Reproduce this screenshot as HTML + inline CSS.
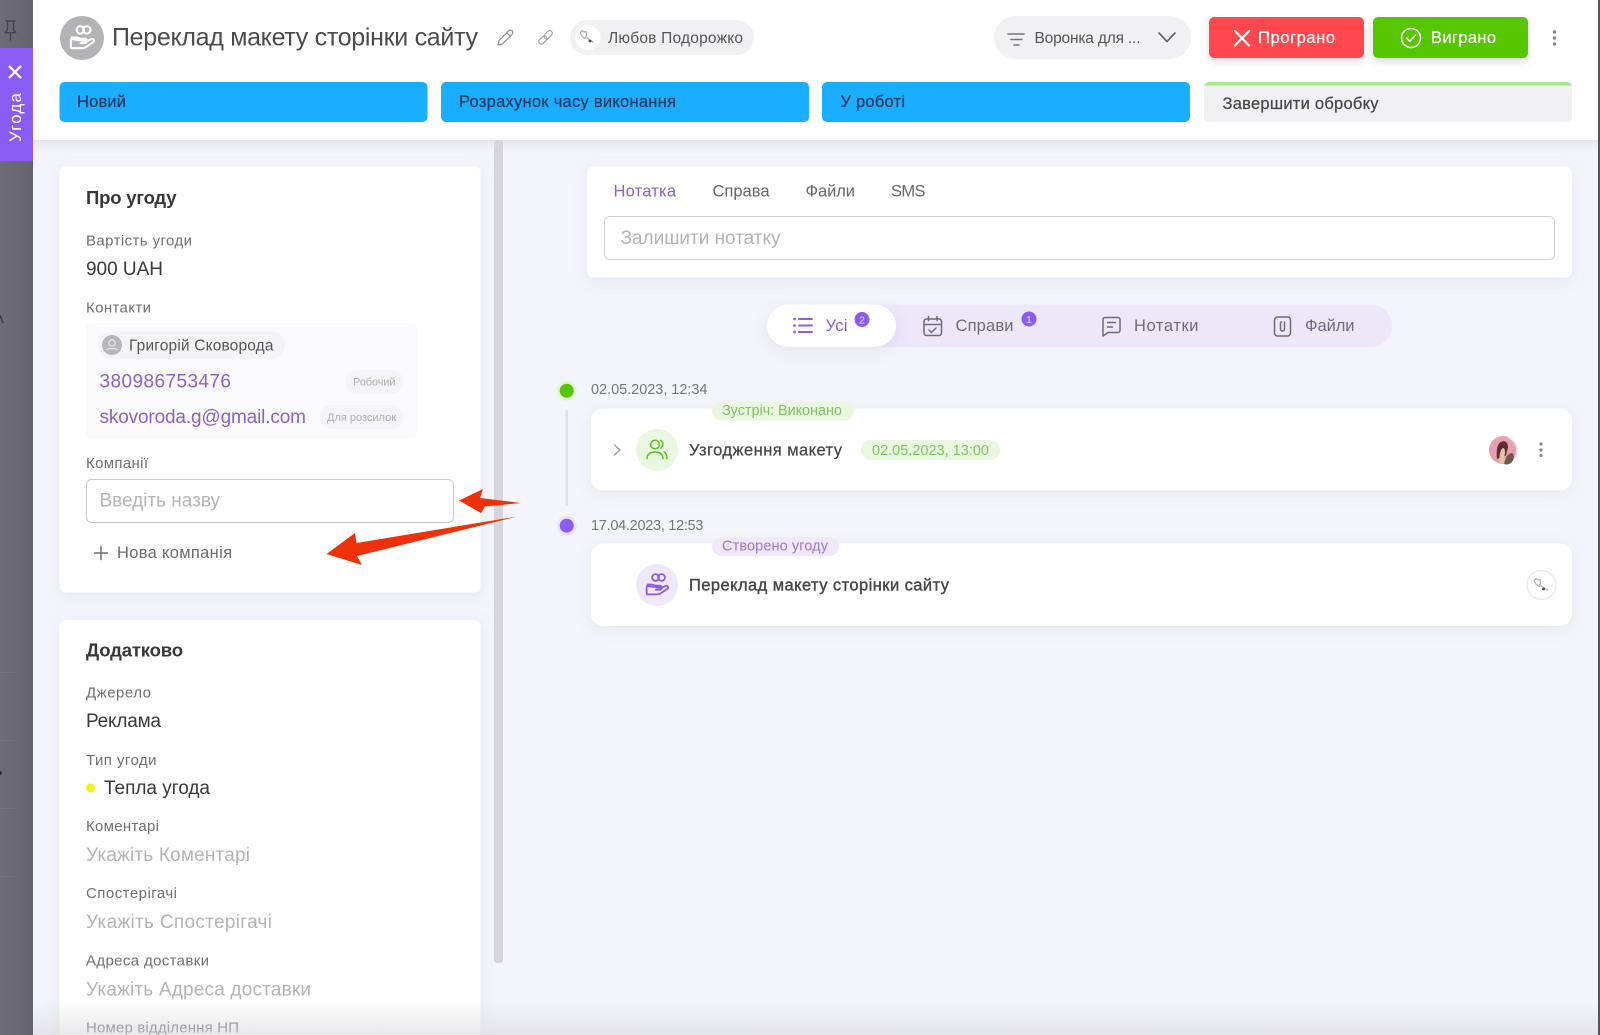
<!DOCTYPE html>
<html lang="uk"><head><meta charset="utf-8"><title>Угода</title>
<style>
html,body{margin:0;padding:0;width:1600px;height:1035px;overflow:hidden;background:#f4f5fb}
svg{display:block;filter:blur(.3px)}
text{font-family:"Liberation Sans",sans-serif;fill:#3e3e44}
.l{font-size:15px;fill:#6f6f75}
.v{font-size:19px;fill:#38383d}
.p{font-size:19px;fill:#b4b4b8}
.h{font-size:18.5px;font-weight:bold;fill:#36363b}
.b{font-size:16.5px;fill:#173a5e;stroke:#173a5e;stroke-width:.25}
.t{fill:#6f6c78}
.d{font-size:14.5px;fill:#77777c}
.g{font-size:14.5px;fill:#7cc75c}
.pu{font-size:14.5px;fill:#9a76d8}
.i{fill:none;stroke-linecap:round;stroke-linejoin:round}
</style></head><body>
<svg width="1600" height="1035" viewBox="0 0 1600 1035" xmlns="http://www.w3.org/2000/svg">
<defs>
<filter id="s" x="-5%" y="-20%" width="110%" height="145%"><feDropShadow dx="0" dy="3" stdDeviation="7" flood-color="#8b8ba8" flood-opacity=".14"/></filter>
<filter id="bs" x="-10%" y="-20%" width="120%" height="170%"><feDropShadow dx="0" dy="4" stdDeviation="4" flood-color="#555" flood-opacity=".2"/></filter>
<filter id="ss" x="-20%" y="-30%" width="140%" height="180%"><feDropShadow dx="0" dy="4" stdDeviation="7" flood-color="#77709a" flood-opacity=".14"/></filter>
<linearGradient id="fade" x1="0" y1="0" x2="0" y2="1"><stop offset="0" stop-color="#d8d8dc" stop-opacity="0"/><stop offset="1" stop-color="#d8d8dc" stop-opacity=".6"/></linearGradient>
<linearGradient id="hs" x1="0" y1="0" x2="0" y2="1"><stop offset="0" stop-color="#d6d6de" stop-opacity=".55"/><stop offset="1" stop-color="#f4f5fb" stop-opacity="0"/></linearGradient>
<linearGradient id="side" x1="0" y1="0" x2="1" y2="0"><stop offset="0" stop-color="#6e6c78"/><stop offset="1" stop-color="#65636e"/></linearGradient>
<symbol id="deal" viewBox="0 0 24 24" overflow="visible">
<circle cx="10.500" cy="4.500" r="3.400"/><circle cx="16.500" cy="4.500" r="3.400"/>
<path d="M2.500 11.500h4c1.500 0 3 1.200 5 1.200h3.300a2 2 0 0 1 0 4h-4M16.500 15l4-2c2.300-1 3.600 1.800 1.600 3l-6.500 4.400c-1 .6-2 1-3.200 1H2.500a.8.8 0 0 1-.8-.8v-6.800a.8.8 0 0 1 .8-.8z"/>
</symbol>
</defs>

<!-- base -->
<rect width="1600" height="1035" fill="#f4f5fb"/>
<rect x="0" y="0" width="33" height="1035" fill="url(#side)"/>
<rect x="1598" y="0" width="2" height="1035" fill="#55535c"/>
<g stroke="#75737e" stroke-width="1"><path d="M0 672.500h16M0 740.500h16M0 808.500h16M0 876.500h16"/></g>
<circle cx="0" cy="773" r="2" fill="#2f2e33"/>
<path d="M0 315l3 8" stroke="#3d3c42" stroke-width="1.500"/>
<path class="i" stroke="#45444b" stroke-width="1.400" d="M6 21h9M7.500 21v8.500l-2.200 3.200h10.400l-2.200-3.200V21M10.500 33v7"/>

<!-- header -->
<rect x="33" y="140" width="1565" height="16" fill="url(#hs)"/>
<rect x="33" y="0" width="1565" height="140" fill="#fff"/>

<rect x="0" y="48" width="33" height="113" fill="#8b5cf3"/>
<path d="M9.500 66.500l11 11M20.500 66.500l-11 11" stroke="#fff" stroke-width="2.200" stroke-linecap="round"/>
<text transform="translate(21 142) rotate(-90)" font-size="17" style="fill:#fff" textLength="49">Угода</text>

<circle cx="82" cy="38" r="22" fill="#b3b3b5"/>
<use href="#deal" x="69" y="25" width="26" height="26" class="i" stroke="#fff" stroke-width="1.900"/>
<text x="112" y="45.500" font-size="25" style="fill:#4a4a50" textLength="366">Переклад макету сторінки сайту</text>
<path class="i" stroke="#8e8e93" stroke-width="1.200" d="M498 45l1-4.500 9.500-9.500c1.200-1.200 2.900-1.200 3.700-.2s.8 2.500-.4 3.700l-9.300 9.500zM507 33l3.500 3.500"/>
<g transform="translate(545.500 37.500) rotate(45)" fill="none" stroke="#a2a2a6" stroke-width="1.200"><rect x="-2.600" y="-8.500" width="5.200" height="9.500" rx="2.600"/><rect x="-2.600" y="-1" width="5.200" height="9.500" rx="2.600"/></g>
<rect x="570" y="20" width="184" height="35" rx="17.500" fill="#f1f1f3"/>
<circle cx="588" cy="37.500" r="12.500" fill="#fff"/>
<path class="i" stroke="#a9a9ae" stroke-width="1.200" d="M580 33l2-2.500 2 1.500 2-.5.500 3-1 4-3-1.500zM587 38l6 4"/>
<circle cx="590" cy="41" r="1.400" fill="#444"/>
<text x="608" y="43" font-size="15.500" style="fill:#55555b" textLength="135">Любов Подорожко</text>

<rect x="994" y="16" width="197" height="43" rx="21.500" fill="#f1f1f3"/>
<path d="M1008 34h16M1011 39.500h11M1014 45h5" stroke="#75757b" stroke-width="1.600" stroke-linecap="round"/>
<text x="1034.500" y="43" font-size="15.500" style="fill:#55555b" textLength="106">Воронка для ...</text>
<path class="i" stroke="#66666c" stroke-width="1.700" d="M1159 33l8 8.500 8-8.500"/>

<rect x="1209" y="17" width="155" height="41" rx="5" fill="#ff4a50" filter="url(#bs)"/>
<path d="M1235 31l14 14.500M1249 31l-14 14.500" stroke="#fff" stroke-width="2.200" stroke-linecap="round"/>
<text x="1258" y="43" font-size="16.500" style="fill:#fff;stroke:#fff;stroke-width:.2" textLength="77">Програно</text>
<rect x="1373" y="17" width="155" height="41" rx="5" fill="#56c600" filter="url(#bs)"/>
<circle cx="1411" cy="38" r="9.500" fill="none" stroke="#fff" stroke-width="1.500"/>
<path class="i" stroke="#fff" stroke-width="1.500" d="M1406.500 38l3.200 3.300 6-6.300"/>
<text x="1431" y="43" font-size="16.500" style="fill:#fff;stroke:#fff;stroke-width:.2" textLength="65">Виграно</text>
<g fill="#85858a"><circle cx="1554.500" cy="32" r="1.700"/><circle cx="1554.500" cy="38" r="1.700"/><circle cx="1554.500" cy="44" r="1.700"/></g>

<rect x="59.500" y="82" width="368" height="40" rx="5" fill="#1badff"/>
<rect x="441" y="82" width="368" height="40" rx="5" fill="#1badff"/>
<rect x="822" y="82" width="368" height="40" rx="5" fill="#1badff"/>
<rect x="1204" y="82" width="368" height="40" rx="5" fill="#a9e88f"/>
<path d="M1204 85.500h368V117a5 5 0 0 1-5 5h-358a5 5 0 0 1-5-5z" fill="#f1f1f3"/>
<text class="b" x="77" y="107" textLength="49">Новий</text>
<text class="b" x="459" y="107" textLength="217">Розрахунок часу виконання</text>
<text class="b" x="840.500" y="107" textLength="64.500">У роботі</text>
<text class="b" x="1222.500" y="109" style="fill:#47474d;stroke:#47474d" textLength="156">Завершити обробку</text>

<!-- scrollbar -->
<rect x="494" y="140" width="9" height="823" rx="3" fill="#d5d5da"/>

<!-- card 1 -->
<rect x="59.500" y="166.500" width="421" height="426" rx="6" fill="#fff" filter="url(#s)"/>
<text class="h" x="86" y="204" textLength="90.500">Про угоду</text>
<text class="l" x="86" y="245.500" textLength="106">Вартість угоди</text>
<text class="v" x="86" y="275" textLength="77">900 UAH</text>
<text class="l" x="86" y="312.500" textLength="65">Контакти</text>
<rect x="86" y="323" width="331" height="115" rx="5" fill="#fafafc"/>
<rect x="98" y="331.500" width="187" height="27.500" rx="13.750" fill="#f4f4f6"/>
<circle cx="112" cy="345" r="10" fill="#b8b8ba"/>
<circle cx="112" cy="343" r="3.200" fill="none" stroke="#e8e8e8" stroke-width="1.100"/>
<path d="M106.500 350c1.500-2 9.500-2 11 0" fill="none" stroke="#e8e8e8" stroke-width="1.100"/>
<text x="129" y="350.500" font-size="15.500" style="fill:#55555b" textLength="144.500">Григорій Сковорода</text>
<text x="99.500" y="387.500" font-size="19" style="fill:#8a62c8" textLength="131.500">380986753476</text>
<rect x="345.500" y="370" width="58" height="24" rx="12" fill="#f4f4f6"/>
<text x="353" y="385.500" font-size="11" style="fill:#b0b0b4" textLength="42.500">Робочий</text>
<text x="99.500" y="423" font-size="19" style="fill:#8a62c8" textLength="206.500">skovoroda.g@gmail.com</text>
<rect x="320" y="405" width="83.500" height="24" rx="12" fill="#f4f4f6"/>
<text x="327" y="421" font-size="11" style="fill:#b0b0b4" textLength="69">Для розсилок</text>
<text class="l" x="86" y="468" textLength="62">Компанії</text>
<rect x="86.500" y="479.500" width="367" height="43" rx="5" fill="#fff" stroke="#c9c9cd"/>
<text class="p" x="99.500" y="506.500" textLength="120.500">Введіть назву</text>
<path d="M94.500 553h13M101 546.500v13" stroke="#6e6e73" stroke-width="1.500" stroke-linecap="round"/>
<text x="117" y="558" font-size="16.500" style="fill:#6b6b70" textLength="115">Нова компанія</text>

<!-- card 2 -->
<rect x="59.500" y="620" width="421" height="460" rx="6" fill="#fff" filter="url(#s)"/>
<text class="h" x="86" y="656.500" textLength="97">Додатково</text>
<text class="l" x="86" y="697.500" textLength="65">Джерело</text>
<text class="v" x="86" y="727" textLength="75">Реклама</text>
<text class="l" x="86" y="765" textLength="70.500">Тип угоди</text>
<circle cx="90.500" cy="788" r="4.500" fill="#f4f21c"/>
<text class="v" x="104" y="794" textLength="106">Тепла угода</text>
<text class="l" x="86" y="831" textLength="73">Коментарі</text>
<text class="p" x="86" y="861" textLength="164">Укажіть Коментарі</text>
<text class="l" x="86" y="898" textLength="91">Спостерігачі</text>
<text class="p" x="86" y="928" textLength="186">Укажіть Спостерігачі</text>
<text class="l" x="86" y="965.500" textLength="123">Адреса доставки</text>
<text class="p" x="86" y="995.500" textLength="225">Укажіть Адреса доставки</text>
<text class="l" x="86" y="1032.500" textLength="153">Номер відділення НП</text>

<!-- arrows -->
<path fill="#ee3108" d="M459 500.500L483 489 480 498 521 503 485 506.500 481 513z"/>
<path fill="#ee3108" d="M326.500 554L355 533 356.500 543 517 516.500 357 556 362 565z"/>

<!-- note card -->
<rect x="587" y="166.500" width="985" height="111" rx="6" fill="#fff" filter="url(#s)"/>
<text x="613.500" y="196.500" font-size="16.500" style="fill:#8a62c8" textLength="62.500">Нотатка</text>
<text x="712.500" y="196.500" font-size="16.500" style="fill:#66666c" textLength="57">Справа</text>
<text x="805.500" y="196.500" font-size="16.500" style="fill:#66666c" textLength="49.500">Файли</text>
<text x="891" y="196.500" font-size="16.500" style="fill:#66666c" textLength="34.500">SMS</text>
<rect x="604.500" y="216.500" width="950" height="43" rx="5" fill="#fff" stroke="#d2d2d6"/>
<text class="p" x="620.500" y="244" textLength="160">Залишити нотатку</text>

<!-- segmented -->
<rect x="767" y="304.500" width="625" height="42.500" rx="21.250" fill="#ede7fa"/>
<rect x="767" y="304.500" width="129" height="42.500" rx="21.250" fill="#fff" filter="url(#ss)"/>
<g stroke="#8b5cf3" stroke-width="2" stroke-linecap="round"><path d="M799 319h13M799 325.500h13M799 332h13"/></g>
<g fill="#8b5cf3"><circle cx="794.500" cy="319" r="1.400"/><circle cx="794.500" cy="325.500" r="1.400"/><circle cx="794.500" cy="332" r="1.400"/></g>
<text x="825.500" y="331" font-size="16.500" style="fill:#8a62c8" textLength="22">Усі</text>
<circle cx="862" cy="319.500" r="7.500" fill="#8b5cf3"/>
<text x="859" y="323.500" font-size="10.500" style="fill:#e8dcff">2</text>
<g stroke="#6f6c78" stroke-width="1.500" fill="none" stroke-linecap="round" stroke-linejoin="round">
<rect x="924" y="319" width="17.500" height="16.500" rx="2.500"/><path d="M924 324.500h17.500M928.500 316.500v4M937 316.500v4M929 330l2.500 2.500 4.500-4.500"/>
<path d="M1103 319.500a2 2 0 0 1 2-2h13a2 2 0 0 1 2 2v11a2 2 0 0 1-2 2h-10l-5 3.500zM1107.500 322.500h8M1107.500 327h5"/>
<rect x="1274.500" y="317" width="16" height="19" rx="3"/><path d="M1284.500 322v7a2 2 0 0 1-4 0v-6a1 1 0 0 1 1-1"/>
</g>
<text class="t" x="955.500" y="331" font-size="16.500" textLength="58">Справи</text>
<circle cx="1029" cy="319" r="7.500" fill="#8b5cf3"/>
<text x="1026" y="323" font-size="10.500" style="fill:#e8dcff">1</text>
<text class="t" x="1134" y="331" font-size="16.500" textLength="64.500">Нотатки</text>
<text class="t" x="1305" y="331" font-size="16.500" textLength="49.500">Файли</text>

<!-- timeline -->
<rect x="565.500" y="410" width="2.500" height="96" rx="1" fill="#e0e0ec"/>
<circle cx="566.700" cy="390.700" r="10" fill="#e3f5d8"/>
<circle cx="566.700" cy="390.700" r="7" fill="#55c500"/>
<text class="d" x="591" y="394" textLength="116.500">02.05.2023, 12:34</text>
<rect x="591" y="408.500" width="981" height="82" rx="12" fill="#fff" filter="url(#s)"/>
<rect x="712" y="401.500" width="142" height="19" rx="9.500" fill="#e9f7e0"/>
<text class="g" x="722" y="415" textLength="120">Зустріч: Виконано</text>
<path class="i" stroke="#a0a0a5" stroke-width="1.500" d="M614.500 445l5.500 5-5.500 5"/>
<circle cx="657" cy="450" r="21" fill="#e9f7e0"/>
<g class="i" stroke="#58c226" stroke-width="1.500"><circle cx="655" cy="444.500" r="4.300"/><path d="M647 458.500c0-4.300 3.500-6.500 8-6.500s8 2.200 8 6.500M660.500 440.500c2.500 1 3.300 5 .5 7.500M664 452c2 1 3 3.300 3 6.500"/></g>
<text x="689" y="455.500" font-size="16.500" style="fill:#45454b;stroke:#45454b;stroke-width:.25" textLength="153">Узгодження макету</text>
<rect x="861" y="440" width="139" height="20" rx="10" fill="#e9f7e0"/>
<text class="g" x="872" y="455" textLength="117">02.05.2023, 13:00</text>
<circle cx="1503" cy="450" r="14" fill="#e89fb0"/>
<path d="M1497 459c-1-8 0-16 5-17.500 4-1 6 2 6 6l-2 8z" fill="#5a2f2c"/>
<path d="M1499.500 463c-.5-5 .5-14 3.500-15 2.500 0 2.500 6 1 9l2 6z" fill="#e3c2a6"/>
<path d="M1504 464c1-6 4-11 8-11 3 1 2 8-1 10-2 1.500-5 2-7 1z" fill="#6e5a48"/>
<path d="M1508 437.500a14 14 0 0 1 7 20" fill="none" stroke="#e3e3e3" stroke-width="1.500"/>
<g fill="#85858a"><circle cx="1541" cy="444" r="1.600"/><circle cx="1541" cy="450" r="1.600"/><circle cx="1541" cy="455.500" r="1.600"/></g>

<circle cx="566.700" cy="525.700" r="10" fill="#ece3fb"/>
<circle cx="566.700" cy="525.700" r="7" fill="#8b5cf3"/>
<text class="d" x="591" y="530" textLength="112.500">17.04.2023, 12:53</text>
<rect x="591" y="543.500" width="981" height="82.500" rx="12" fill="#fff" filter="url(#s)"/>
<rect x="712" y="537" width="127" height="19" rx="9.500" fill="#f0e9fb"/>
<text class="pu" x="722" y="550.500" textLength="106">Створено угоду</text>
<circle cx="657" cy="585" r="21" fill="#efe7fb"/>
<use href="#deal" x="645" y="573" width="24" height="24" class="i" stroke="#8b5cdc" stroke-width="1.800"/>
<text x="689" y="590.500" font-size="16.500" style="fill:#45454b;stroke:#45454b;stroke-width:.4" textLength="260">Переклад макету сторінки сайту</text>
<circle cx="1541.500" cy="585" r="14.500" fill="#fff" stroke="#e9e9ec" stroke-width="1.500"/>
<path class="i" stroke="#a9a9ae" stroke-width="1.100" d="M1534 581l2-2.500 2 1.500 2-.5.500 3-1 4-3-1.500zM1541 586l7 4"/>
<circle cx="1543.500" cy="589" r="1.400" fill="#444"/>

<!-- bottom fade -->
<rect x="33" y="1000" width="1565" height="35" fill="url(#fade)"/>
</svg>
</body></html>
